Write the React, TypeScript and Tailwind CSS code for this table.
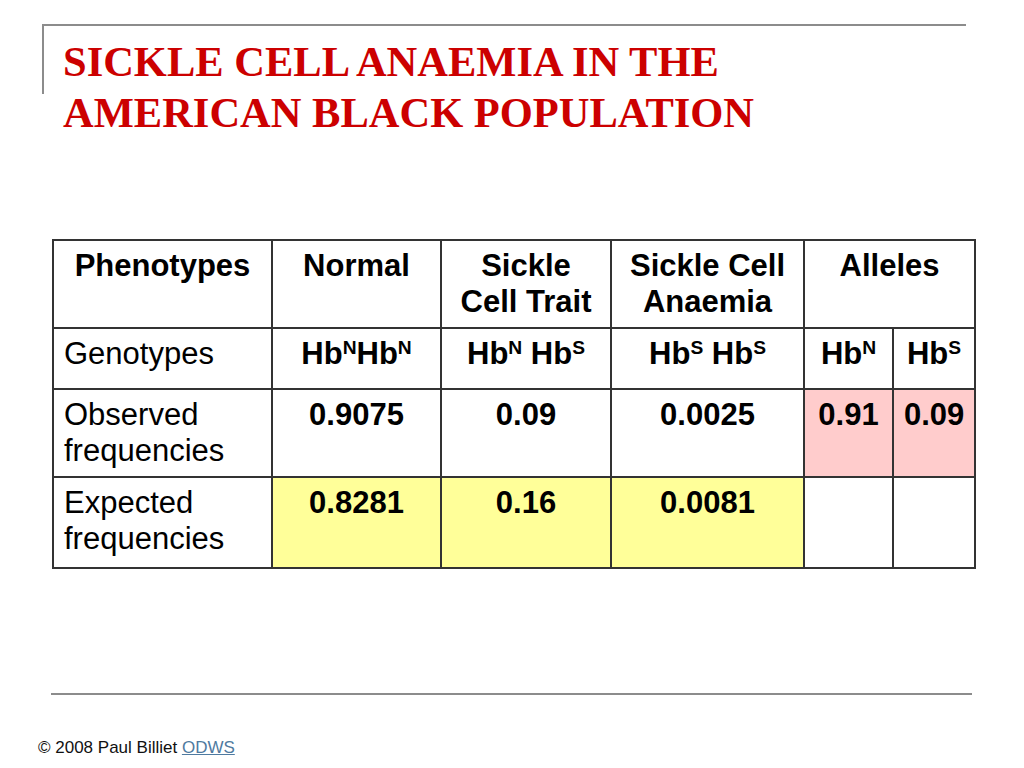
import React from "react";

const Hb = ({ s }: { s: string }) => (
  <span>
    Hb<span className="relative -top-[0.5em] text-[0.62em] leading-none">{s}</span>
  </span>
);

export default function App() {
  const cell = "border-2 border-[#333333] align-top px-[10px] pt-[7px]";
  return (
    <div
      className="w-[1024px] h-[768px] bg-white overflow-hidden text-black"
      style={{ fontFamily: '"Liberation Sans", Arial, sans-serif' }}
    >
      <div className="ml-[42px] pt-[24px] w-[924px]">
        <div className="flex border-t-2 border-[#8c8c8c]">
          <div className="w-[2px] h-[68px] bg-[#8c8c8c] shrink-0" />
          <h1
            className="ml-[19px] mt-[10px] text-[42.5px] leading-[51px] font-bold text-[#cc0000] whitespace-nowrap"
            style={{ fontFamily: '"Liberation Serif", "Times New Roman", serif' }}
          >
            SICKLE CELL ANAEMIA IN THE
            <br />
            AMERICAN BLACK POPULATION
          </h1>
        </div>
      </div>

      <table className="ml-[52px] mt-[101px] w-[922px] table-fixed border-collapse text-[31px] leading-[36px]">
        <colgroup>
          <col className="w-[219px]" />
          <col className="w-[169px]" />
          <col className="w-[170px]" />
          <col className="w-[193px]" />
          <col className="w-[89px]" />
          <col className="w-[82px]" />
        </colgroup>
        <tbody>
          <tr className="h-[88px]">
            <td className={`${cell} font-bold text-center`}>Phenotypes</td>
            <td className={`${cell} font-bold text-center`}>Normal</td>
            <td className={`${cell} font-bold text-center`}>
              Sickle
              <br />
              Cell Trait
            </td>
            <td className={`${cell} font-bold text-center`}>
              Sickle Cell
              <br />
              Anaemia
            </td>
            <td className={`${cell} font-bold text-center`} colSpan={2}>
              Alleles
            </td>
          </tr>
          <tr className="h-[61px]">
            <td className={`${cell} text-left`}>Genotypes</td>
            <td className={`${cell} font-bold text-center whitespace-nowrap`}>
              <Hb s="N" />
              <Hb s="N" />
            </td>
            <td className={`${cell} font-bold text-center whitespace-nowrap`}>
              <Hb s="N" /> <Hb s="S" />
            </td>
            <td className={`${cell} font-bold text-center whitespace-nowrap`}>
              <Hb s="S" /> <Hb s="S" />
            </td>
            <td className={`${cell} font-bold text-center px-0`}>
              <Hb s="N" />
            </td>
            <td className={`${cell} font-bold text-center px-0`}>
              <Hb s="S" />
            </td>
          </tr>
          <tr className="h-[88px]">
            <td className={`${cell} text-left`}>
              Observed
              <br />
              frequencies
            </td>
            <td className={`${cell} font-bold text-center`}>0.9075</td>
            <td className={`${cell} font-bold text-center`}>0.09</td>
            <td className={`${cell} font-bold text-center`}>0.0025</td>
            <td className={`${cell} font-bold text-center px-0 bg-[#ffcccc]`}>0.91</td>
            <td className={`${cell} font-bold text-center px-0 bg-[#ffcccc]`}>0.09</td>
          </tr>
          <tr className="h-[91px]">
            <td className={`${cell} text-left`}>
              Expected
              <br />
              frequencies
            </td>
            <td className={`${cell} font-bold text-center bg-[#ffff99]`}>0.8281</td>
            <td className={`${cell} font-bold text-center bg-[#ffff99]`}>0.16</td>
            <td className={`${cell} font-bold text-center bg-[#ffff99]`}>0.0081</td>
            <td className={cell}></td>
            <td className={cell}></td>
          </tr>
        </tbody>
      </table>

      <div className="ml-[51px] mt-[124px] w-[921px] h-[2px] bg-[#8c8c8c]" />

      <div className="ml-[38px] mt-[43px] text-[17px] leading-[20px] text-[#111]">
        © 2008 Paul Billiet{" "}
        <a className="text-[#4f7aa0] underline" href="#">
          ODWS
        </a>
      </div>
    </div>
  );
}
